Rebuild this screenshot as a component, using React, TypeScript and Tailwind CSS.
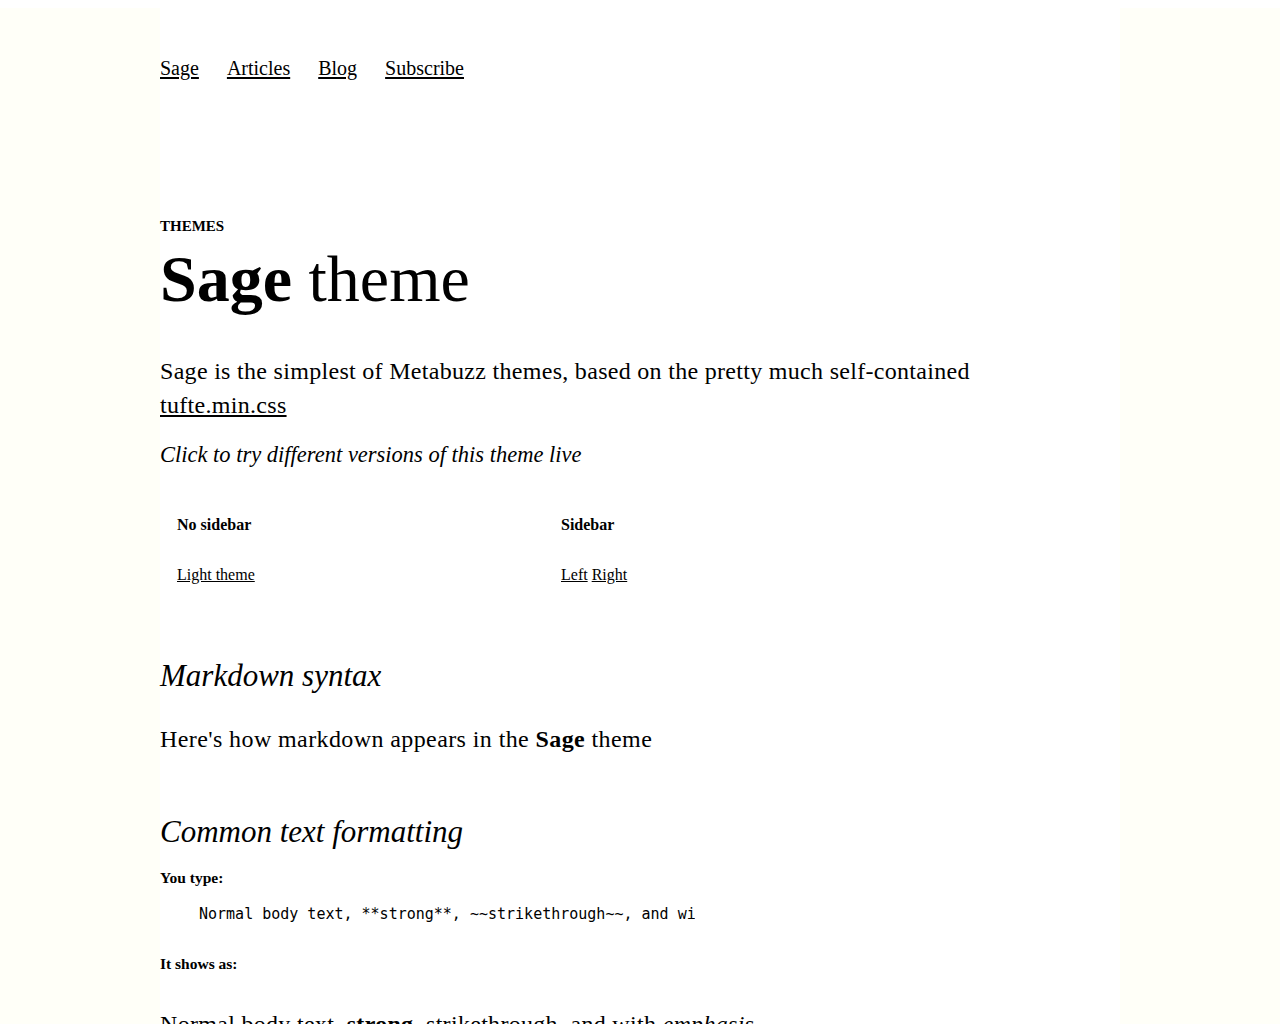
import React from "react";

const serif = { fontFamily: '"Liberation Serif", "DejaVu Serif", serif' };

export default function App() {
  return (
    <div className="flex min-h-[1024px] bg-white text-black" style={serif}>
      <div className="flex-1 mt-2 bg-[#fffff8]" />
      <main className="w-[960px] shrink-0 bg-white pt-[52px] pb-10">
        <nav className="flex gap-7 text-[20px] leading-[32px]">
          <a className="underline underline-offset-2" href="#">Sage</a>
          <a className="underline underline-offset-2" href="#">Articles</a>
          <a className="underline underline-offset-2" href="#">Blog</a>
          <a className="underline underline-offset-2" href="#">Subscribe</a>
        </nav>

        <div className="mt-[132px] text-[15px] font-bold leading-[20px]">THEMES</div>
        <h1 className="text-[66px] leading-[72px] mt-[7px]">
          <span className="font-bold">Sage</span> theme
        </h1>

        <p className="mt-[39px] text-[24px] leading-[34px] tracking-[0.3px] w-[860px]">
          Sage is the simplest of Metabuzz themes, based on the pretty much self-contained{" "}
          <a className="underline underline-offset-2" href="#">tufte.min.css</a>
        </p>
        <p className="mt-[16px] text-[22.5px] leading-[34px] italic">
          Click to try different versions of this theme live
        </p>

        <table className="mt-[28px] text-[16px] leading-[24px]">
          <tbody>
            <tr>
              <th className="text-left font-bold w-[401px] pl-[17px] py-[13px]">No sidebar</th>
              <th className="text-left font-bold pl-0 py-[13px]">Sidebar</th>
            </tr>
            <tr>
              <td className="pl-[17px] py-[13px]">
                <a className="underline" href="#">Light theme</a>
              </td>
              <td className="py-[13px]">
                <a className="underline" href="#">Left</a> <a className="underline" href="#">Right</a>
              </td>
            </tr>
          </tbody>
        </table>

        <h2 className="mt-[56px] text-[31px] leading-[40px] italic">Markdown syntax</h2>
        <p className="mt-[26px] text-[24px] leading-[34px] tracking-[0.4px]">
          Here's how markdown appears in the <strong>Sage</strong> theme
        </p>

        <h2 className="mt-[56px] text-[31px] leading-[40px] italic">Common text formatting</h2>
        <div className="mt-[16px] text-[15.5px] font-bold leading-[20px]">You type:</div>
        <div className="mt-[16px] pl-[39px] w-[535px] overflow-hidden">
          <pre
            className="text-[15px] leading-[20px] whitespace-pre"
            style={{ fontFamily: '"DejaVu Sans Mono", monospace' }}
          >
            Normal body text, **strong**, ~~strikethrough~~, and with *emphasis*
          </pre>
        </div>
        <div className="mt-[30px] text-[15.5px] font-bold leading-[20px]">It shows as:</div>
        <p className="mt-[33px] text-[24px] leading-[34px] tracking-[0.3px]">
          Normal body text, <strong>strong</strong>, <s>strikethrough</s>, and with <em>emphasis</em>
        </p>
      </main>
      <div className="flex-1 mt-2 bg-[#fffff8]" />
    </div>
  );
}
